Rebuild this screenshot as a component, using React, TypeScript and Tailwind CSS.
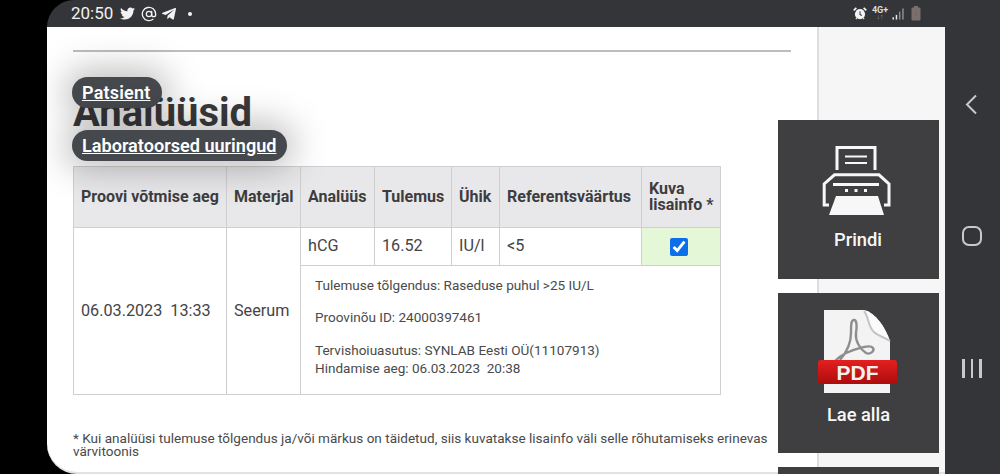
import { AtSign } from 'lucide-react';
import { FaTwitter, FaTelegramPlane } from 'react-icons/fa';

const headers = [
  { label: 'Proovi võtmise aeg', width: 'w-[153px]' },
  { label: 'Materjal', width: 'w-[74px]' },
  { label: 'Analüüs', width: 'w-[74px]' },
  { label: 'Tulemus', width: 'w-[77px]' },
  { label: 'Ühik', width: 'w-[48px]' },
  { label: 'Referentsväärtus', width: 'w-[142px]' },
  { label: 'Kuva lisainfo *', width: 'w-[79px]' },
];

function AlarmIcon() {
  return (
    <svg width="14" height="15" viewBox="0 0 15 15" fill="none">
      <circle cx="7.5" cy="8.2" r="5.4" fill="#f4f4f4" />
      <path d="M7.5 5v3.4l2 1.2" stroke="#333538" strokeWidth="1.1" />
      <path d="M0.8 4.2 3.6 1.4M14.2 4.2 11.4 1.4" stroke="#f4f4f4" strokeWidth="1.8" />
      <path d="M3 13.6l1-1.2M12 13.6l-1-1.2" stroke="#f4f4f4" strokeWidth="1.1" />
    </svg>
  );
}

function SignalIcon() {
  return (
    <svg width="13" height="14" viewBox="0 0 14 14" fill="none">
      <rect x="0.5" y="10.5" width="1.6" height="2.5" fill="#e8e8e8" />
      <rect x="4" y="8" width="1.6" height="5" fill="#e8e8e8" />
      <rect x="7.5" y="4.5" width="1.6" height="8.5" fill="#8d8d8f" />
      <rect x="11" y="1" width="1.6" height="12" fill="#8d8d8f" />
    </svg>
  );
}

function BatteryIcon() {
  return (
    <svg width="10" height="15" viewBox="0 0 10 15" fill="none">
      <rect x="3" y="0" width="4" height="2" fill="#77706c" />
      <rect x="0.5" y="1.5" width="9" height="13" rx="1" fill="#77706c" />
      <rect x="4.4" y="5" width="1.2" height="5" fill="#9c5a52" />
    </svg>
  );
}

function PrinterIcon() {
  return (
    <svg width="100" height="90" viewBox="0 0 100 90" fill="none" stroke="#f7f7f7">
      <path d="M29 35V12.5H67V35" strokeWidth="3" />
      <path d="M37 21.5H59M37 28H59" strokeWidth="1.8" />
      <path d="M21 70H16.2V49L26.5 39.8H71L81 49V70H76" strokeWidth="3" />
      <path d="M25 49.5H71" strokeWidth="3" />
      <path d="M37 55.5h3M46.5 55.5h3M56 55.5h3" strokeWidth="3" />
      <path d="M21 80 28 61H70L76 80Z" fill="#f7f7f7" stroke="none" />
    </svg>
  );
}

function PdfIcon() {
  return (
    <svg width="80" height="85" viewBox="0 0 80 85" fill="none">
      <defs>
        <linearGradient id="pdfBanner" x1="0" y1="0" x2="0" y2="1">
          <stop offset="0" stopColor="#e4201f" />
          <stop offset="1" stopColor="#ad0c0d" />
        </linearGradient>
      </defs>
      <path d="M6 1H46C58 4 67 18 72 32V84H6Z" fill="#f3f3f3" />
      <path d="M46 1C58 4 67 18 72 32C66 28 60 27 56 23C50 18 51 8 46 1Z" fill="#fbfbfb" />
      <path d="M46 2C51 8 50 18 56 23C60 27 66 28 72 32" stroke="#c4c4c6" strokeWidth="2" />
      <path
        d="M22 51C28 44 33 34 33 24C33 16 33 11 36 11C39 11 39 18 38 24C37 32 42 40 48 44C52 46 57 42 55 39C52 35 40 39 28 44C24 46 20 49 17 52"
        stroke="#8e8e90"
        strokeWidth="2.4"
      />
      <rect x="0" y="51" width="79" height="24" rx="3" fill="url(#pdfBanner)" />
      <text
        x="39.5"
        y="71"
        textAnchor="middle"
        fill="#f4f0f0"
        fontFamily="Liberation Sans, sans-serif"
        fontWeight="700"
        fontSize="21"
      >
        PDF
      </text>
    </svg>
  );
}

export default function App() {
  return (
    <div className="relative flex w-[1000px] h-[474px] overflow-hidden bg-black font-[Roboto,sans-serif] text-[#444446]">
      <div className="w-[47px] shrink-0" />

      <div className="flex flex-col w-[898px] shrink-0">
        {/* Status bar */}
        <div className="flex items-center justify-between h-[27px] pl-[24px] pr-[24px] bg-[#333538] rounded-tl-[28px]">
          <div className="flex items-center text-[#f2f2f2]">
            <span className="text-[17px] leading-none mr-[7px]">20:50</span>
            <FaTwitter className="w-[15px] h-[15px] mr-[6px]" />
            <AtSign className="w-[16px] h-[16px] mr-[4px]" strokeWidth={2} />
            <FaTelegramPlane className="w-[16px] h-[16px] mr-[11px]" />
            <span className="w-[4px] h-[4px] rounded-full bg-[#f2f2f2]" />
          </div>
          <div className="flex items-center">
            <AlarmIcon />
            <div className="flex flex-col items-center w-[14px] ml-[6px] text-[#dcdcdc]">
              <span className="text-[9px] leading-[8px] font-bold">4G+</span>
              <span className="text-[7px] leading-[7px] text-[#9a9a9a]">↓↑</span>
            </div>
            <div className="ml-[5px]">
              <SignalIcon />
            </div>
            <div className="ml-[6px]">
              <BatteryIcon />
            </div>
          </div>
        </div>

        <div className="flex flex-1 min-h-0 bg-white rounded-bl-[30px] overflow-hidden border-b-2 border-[#e2e2e2]">
          {/* Main content */}
          <div className="w-[770px] shrink-0 pl-[26px] pr-[26px]">
            <hr className="mt-[23px] border-t-2 border-[#bdbdbd]" />
            <h1 className="mt-[37px] text-[40px] leading-[48px] font-bold text-[#3a3a3c]">Analüüsid</h1>
            <table className="mt-[29px] w-[647px] table-fixed border-collapse text-[16.2px] border border-[#cfcfcf]">
              <thead>
                <tr className="h-[61px] bg-[#e8e8ea]">
                  {headers.map((h) => (
                    <th
                      key={h.label}
                      className={`${h.width} border border-[#cfcfcf] pl-[7px] pr-[2px] text-left text-[16px] font-bold leading-[16px] text-[#3d3d3f]`}
                    >
                      {h.label}
                    </th>
                  ))}
                </tr>
              </thead>
              <tbody>
                <tr className="h-[38px]">
                  <td rowSpan={2} className="border border-[#cfcfcf] px-[7px] whitespace-pre">
                    06.03.2023  13:33
                  </td>
                  <td rowSpan={2} className="border border-[#cfcfcf] px-[7px]">
                    Seerum
                  </td>
                  <td className="border border-[#cfcfcf] px-[7px] pb-[1px]">hCG</td>
                  <td className="border border-[#cfcfcf] px-[7px] pb-[1px]">16.52</td>
                  <td className="border border-[#cfcfcf] px-[7px] pb-[1px]">IU/l</td>
                  <td className="border border-[#cfcfcf] px-[7px] pb-[1px]">&lt;5</td>
                  <td className="border border-[#cfcfcf] bg-[#e4f8d8] text-center">
                    <input
                      type="checkbox"
                      checked
                      readOnly
                      className="align-middle -ml-[4px] w-[18px] h-[18px] accent-[#0b6fe8]"
                    />
                  </td>
                </tr>
                <tr className="h-[129px]">
                  <td
                    colSpan={5}
                    className="align-top border border-[#cfcfcf] pl-[14px] pr-[7px] pt-[10px] text-[13.55px] leading-[18px] text-[#4a4a4c] whitespace-pre"
                  >
                    <p>Tulemuse tõlgendus: Raseduse puhul &gt;25 IU/L</p>
                    <p className="mt-[14px]">Proovinõu ID: 24000397461</p>
                    <p className="mt-[15px]">Tervishoiuasutus: SYNLAB Eesti OÜ(11107913)</p>
                    <p>Hindamise aeg: 06.03.2023  20:38</p>
                  </td>
                </tr>
              </tbody>
            </table>
            <p className="mt-[37px] text-[13.55px] leading-[13px] text-[#4a4a4c]">
              * Kui analüüsi tulemuse tõlgendus ja/või märkus on täidetud, siis kuvatakse lisainfo väli selle rõhutamiseks erinevas värvitoonis
            </p>
          </div>

          {/* Right rail */}
          <div className="flex-1 bg-[#f6f6f6] border-l-2 border-[#dedede]" />
        </div>
      </div>

      {/* Android nav bar */}
      <div className="flex flex-col items-center w-[55px] shrink-0 bg-[#333538] text-[#c9c9cb]">
        <svg className="mt-[94px] -ml-[3px]" width="14" height="21" viewBox="0 0 14 21" fill="none" stroke="currentColor" strokeWidth="2">
          <path d="M12 1.5 3 10.5l9 9" />
        </svg>
        <span className="mt-[111px] -ml-[1px] w-[20px] h-[20px] rounded-[7px] border-2 border-current" />
        <div className="mt-[113px] -ml-[1px] flex gap-[6px]">
          <span className="w-[2.5px] h-[19px] bg-current" />
          <span className="w-[2.5px] h-[19px] bg-current" />
          <span className="w-[2.5px] h-[19px] bg-current" />
        </div>
      </div>

      {/* Floating breadcrumbs */}
      <a className="absolute left-[72px] top-[77px] flex items-center h-[31px] pl-[10px] pr-[11px] rounded-[16px] bg-[#45484d] text-[18px] tracking-[0.2px] font-semibold text-white underline shadow-[0_0_35px_8px_rgba(0,0,0,0.26)]">
        Patsient
      </a>
      <a className="absolute left-[72px] top-[130px] flex items-center h-[31px] px-[10px] rounded-[16px] bg-[#45484d] text-[18.1px] font-semibold text-white underline shadow-[0_0_35px_8px_rgba(0,0,0,0.26)]">
        Laboratoorsed uuringud
      </a>

      {/* Floating actions */}
      <div className="absolute left-[778px] top-[120px] flex flex-col gap-[14px] w-[161px]">
        <div className="relative flex flex-col items-center h-[159px] shrink-0 bg-[#3f3f41]">
          <div className="mt-[15px] h-[90px] -ml-[1px]">
            <PrinterIcon />
          </div>
          <span className="mt-[3px] -ml-[1px] text-[18.3px] leading-[24px] font-medium text-[#f7f7f7]">Prindi</span>
        </div>
        <div className="flex flex-col items-center h-[160px] shrink-0 bg-[#3f3f41]">
          <div className="mt-[16px] h-[85px] -ml-[1px]">
            <PdfIcon />
          </div>
          <span className="mt-[9px] text-[18.3px] leading-[24px] font-medium text-[#f7f7f7]">Lae alla</span>
        </div>
        <div className="h-[160px] shrink-0 bg-[#3f3f41]" />
      </div>
    </div>
  );
}
